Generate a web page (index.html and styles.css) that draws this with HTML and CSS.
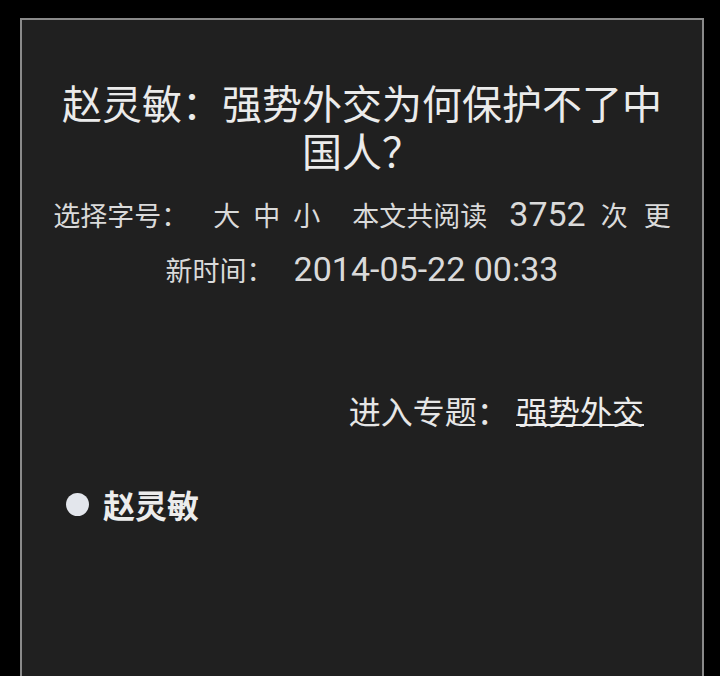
FILE: index.html
```html
<!DOCTYPE html>
<html lang="zh-CN">
<head>
<meta charset="utf-8">
<title>赵灵敏：强势外交为何保护不了中国人？</title>
<link rel="stylesheet" href="styles.css">
</head>
<body>
<div class="frame">
  <h1 class="title">赵灵敏：强势外交为何保护不了中国人？</h1>
  <p class="meta">选择字号：<span class="size first">大</span><span class="size">中</span><span class="size">小</span><span class="count">本文共阅读</span><span class="num count-num">3752</span><span class="times">次</span><span class="update">更新时间：</span><span class="num date">2014-05-22 00:33</span></p>
  <p class="topic">进入专题： <a class="topic-link" href="#">强势外交</a></p>
  <div class="author"><span class="dot"></span><span class="author-name">赵灵敏</span></div>
</div>
</body>
</html>
```

FILE: styles.css
```css
html, body {
  margin: 0;
  padding: 0;
  background: #000;
  overflow: hidden;
}

body {
  font-family: "Noto Sans CJK SC", "Noto Sans", sans-serif;
  color: #e6e6e6;
}

.frame {
  box-sizing: border-box;
  width: 684px;
  height: 658px;
  margin: 18px 0 0 20px;
  border: 2px solid #8a8a8a;
  border-bottom: 0;
  background: #202020;
}

.title {
  margin: 0;
  padding: 58px 36px 0;
  font-size: 40px;
  line-height: 48px;
  font-weight: 400;
  text-align: center;
  color: #ebebeb;
}

.meta {
  margin: 13px 0 0;
  padding: 0 24px;
  font-size: 27px;
  line-height: 54px;
  text-align: center;
  color: #dadada;
}

.size {
  margin-left: 13px;
}

.size.first {
  margin-left: 25px;
}

.count {
  margin-left: 32px;
}

.num {
  font-family: Roboto, "Liberation Sans", sans-serif;
  font-size: 34px;
}

.count-num {
  margin-left: 22px;
}

.times {
  margin-left: 15px;
}

.update {
  margin-left: 16px;
}

.date {
  margin-left: 20px;
}

.topic {
  margin: 93px 0 0;
  padding-right: 58px;
  font-size: 32px;
  line-height: 40px;
  text-align: right;
  color: #e6e6e6;
}

.topic-link {
  color: #ececec;
  text-decoration: underline;
  text-decoration-thickness: 2px;
  text-underline-offset: 0px;
}

.author {
  display: flex;
  align-items: center;
  gap: 14px;
  margin-top: 52px;
  padding-left: 44px;
  height: 44px;
}

.dot {
  width: 23px;
  height: 23px;
  border-radius: 50%;
  background: #e3e6ec;
}

.author-name {
  font-size: 32px;
  line-height: 40px;
  font-weight: 700;
  color: #ececec;
}
```
